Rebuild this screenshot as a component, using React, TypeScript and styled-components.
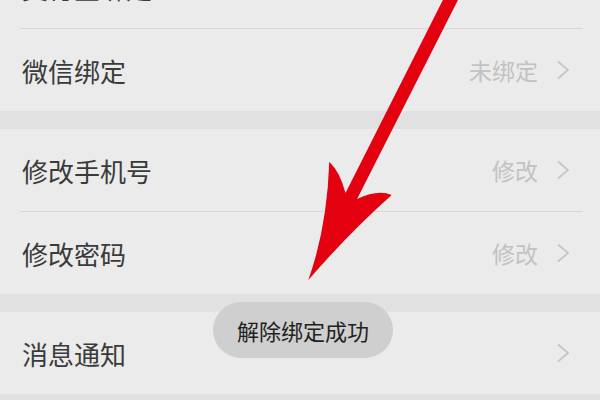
import React from 'react';
import styled, { createGlobalStyle } from 'styled-components';

const GlobalStyle = createGlobalStyle`
  html, body {
    margin: 0;
    padding: 0;
    background: #ebebeb;
  }
  body {
    font-family: "Noto Sans CJK SC", "Noto Sans", sans-serif;
  }
`;

interface Item {
  label: string;
  value?: string;
}

const groups: Item[][] = [
  [{ label: '支付宝绑定', value: '未绑定' }, { label: '微信绑定', value: '未绑定' }],
  [{ label: '修改手机号', value: '修改' }, { label: '修改密码', value: '修改' }],
  [{ label: '消息通知' }],
];

const Chevron = () => (
  <svg width="14" height="20" viewBox="0 0 14 20">
    <polyline points="2,1.5 12,10 2,18.5" fill="none" stroke="#c6c6c6" strokeWidth="1.8" strokeLinejoin="miter" />
  </svg>
);

const Arrow = () => (
  <ArrowLayer viewBox="0 0 600 400" width="600" height="400">
    <path
      d="M453 -20 L345.5 193 Q340 172 329.3 161.7 Q327 228 308.3 280 Q350 232 391.7 195 Q378 189 357.1 199 L468.1 -20 Z"
      fill="#e3000f"
    />
  </ArrowLayer>
);

const App: React.FC = () => {
  return (
    <Page>
      <GlobalStyle />
      {groups.map((items, gi) => (
        <React.Fragment key={gi}>
          <Group $pull={gi === 0}>
            {items.map((item, i) => (
              <React.Fragment key={item.label}>
                {i > 0 && <Divider />}
                <Row>
                  <Label>{item.label}</Label>
                  <Right>
                    {item.value && <Value>{item.value}</Value>}
                    <Chevron />
                  </Right>
                </Row>
              </React.Fragment>
            ))}
          </Group>
          <Band />
        </React.Fragment>
      ))}
      <Arrow />
      <Toast>解除绑定成功</Toast>
    </Page>
  );
};

export default App;

const Page = styled.div`
  position: relative;
  width: 600px;
  height: 400px;
  overflow: hidden;
  background: #ebebeb;
  display: flex;
  flex-direction: column;
`;

const Group = styled.div<{ $pull?: boolean }>`
  display: flex;
  flex-direction: column;
  background: #ebebeb;
  margin-top: ${(p) => (p.$pull ? '-54px' : '0')};
`;

const Row = styled.div`
  height: 82px;
  flex-shrink: 0;
  display: flex;
  align-items: center;
  justify-content: space-between;
  padding: 0 30px 0 22px;
`;

const Label = styled.span`
  font-size: 26px;
  color: #3a3a3a;
  letter-spacing: 0;
`;

const Right = styled.div`
  display: flex;
  align-items: center;
  gap: 18px;
`;

const Value = styled.span`
  font-size: 23px;
  color: #c2c2c2;
`;

const Divider = styled.div`
  height: 1px;
  flex-shrink: 0;
  margin: 0 17px 0 20px;
  background: #d7d7d7;
`;

const Band = styled.div`
  height: 18px;
  flex-shrink: 0;
  background: #e1e1e1;
`;

const ArrowLayer = styled.svg`
  position: absolute;
  top: 0;
  left: 0;
  pointer-events: none;
`;

const Toast = styled.div`
  position: absolute;
  top: 302px;
  left: 213px;
  width: 180px;
  height: 56px;
  border-radius: 28px;
  background: #cfcfcf;
  display: flex;
  align-items: center;
  justify-content: center;
  font-size: 22px;
  color: #222;
`;
